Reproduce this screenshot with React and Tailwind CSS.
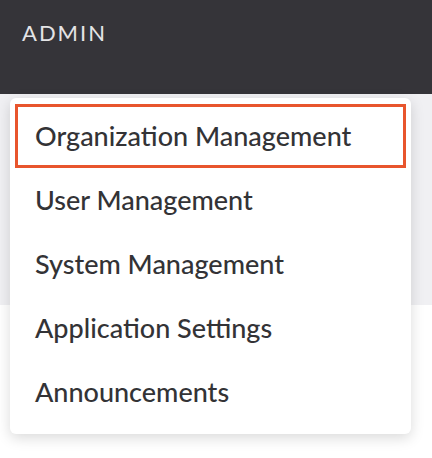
export default function App() {
  const items = ["User Management", "System Management", "Application Settings", "Announcements"];
  return (
    <div className="relative h-[458px] w-[432px] overflow-hidden bg-white" style={{ fontFamily: "Lato, 'Open Sans', sans-serif" }}>
      <div className="h-[94px] bg-[#353439] px-[22px] pt-[16px]">
        <span className="text-[22px] tracking-[2px] text-[#e4e4e6]">ADMIN</span>
      </div>
      <div className="h-[211px] bg-[#f0f0f3]" />
      <div className="absolute left-[10px] top-[98px] w-[401px] rounded-[6px] bg-white pt-[6px] pb-[10px] shadow-[0_4px_14px_rgba(0,0,0,0.15)]">
        <div className="mx-[5px] flex h-[64px] items-center border-[3px] border-[#e8552d] pl-[17px] text-[27px] font-medium text-[#333336]">
          Organization Management
        </div>
        {items.map((t) => (
          <div key={t} className="flex h-[64px] items-center pl-[25px] text-[27px] font-medium text-[#333336]">
            {t}
          </div>
        ))}
      </div>
    </div>
  );
}
